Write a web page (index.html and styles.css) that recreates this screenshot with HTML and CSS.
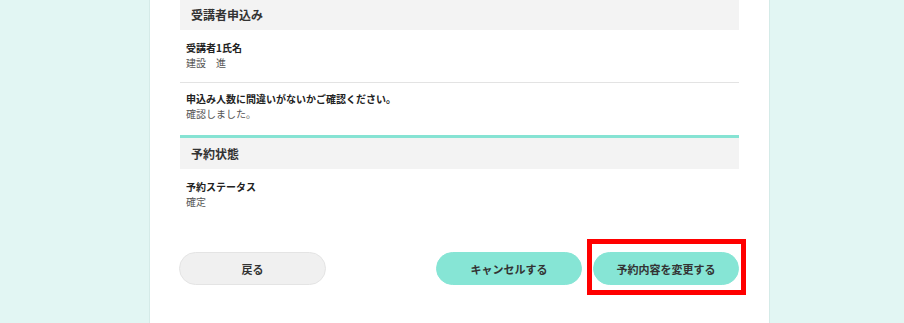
FILE: index.html
```html
<!DOCTYPE html>
<html lang="ja">
<head>
    <meta charset="UTF-8">
    <meta name="viewport" content="width=device-width, initial-scale=1.0">
    <title>予約内容の確認</title>
    <link rel="stylesheet" href="styles.css">
</head>
<body>
    <div class="container">
        <section class="section first">
            <h2 class="section-head">受講者申込み</h2>
            <div class="item">
                <div class="item-label">受講者1氏名</div>
                <div class="item-value">建設　進</div>
            </div>
            <div class="item">
                <div class="item-label">申込み人数に間違いがないかご確認ください。</div>
                <div class="item-value">確認しました。</div>
            </div>
        </section>

        <section class="section">
            <h2 class="section-head">予約状態</h2>
            <div class="item">
                <div class="item-label">予約ステータス</div>
                <div class="item-value">確定</div>
            </div>
        </section>

        <div class="action-buttons">
            <button class="btn back">戻る</button>
            <div class="right-buttons">
                <button class="btn primary">キャンセルする</button>
                <span class="highlight">
                    <button class="btn primary">予約内容を変更する</button>
                </span>
            </div>
        </div>
    </div>
</body>
</html>
```

FILE: styles.css
```css
* {
    margin: 0;
    padding: 0;
    box-sizing: border-box;
    font-family: "Noto Sans CJK JP", "Noto Sans", sans-serif;
}

body {
    background-color: #e2f6f3;
    color: #333;
    min-height: 100vh;
}

.container {
    background-color: #fff;
    border-left: 1px solid #d5ebe8;
    border-right: 1px solid #d5ebe8;
    width: 621px;
    min-height: 100vh;
    margin-left: 149px;
    padding: 0 30px 40px 30px;
}

.section {
    border-top: 3px solid #86e3d3;
    margin-top: 1px;
}

.section.first {
    border-top: none;
    margin-top: -1px;
}

.section-head {
    background-color: #f3f3f3;
    height: 31px;
    line-height: 31px;
    padding-left: 11px;
    font-size: 12px;
    font-weight: bold;
    color: #333;
}

.item {
    padding: 10px 6px 12px;
}

.item + .item {
    border-top: 1px solid #e3e3e3;
    padding-top: 8px;
    padding-bottom: 13px;
}

.item-label {
    font-size: 10px;
    line-height: 15px;
    font-weight: bold;
    color: #222;
}

.item-value {
    font-size: 10px;
    line-height: 15px;
    color: #555;
}

.action-buttons {
    display: flex;
    justify-content: space-between;
    align-items: center;
    margin-top: 31px;
}

.right-buttons {
    display: flex;
    gap: 11px;
}

.btn {
    width: 146px;
    height: 33px;
    border-radius: 17px;
    border: 1px solid #86e5d5;
    background-color: #86e5d5;
    color: #333;
    font-size: 11px;
    font-weight: bold;
    cursor: pointer;
}

.btn.back {
    width: 147px;
    margin-left: -1px;
    background-color: #f0f0f0;
    border-color: #e4e4e4;
}

.highlight {
    position: relative;
    display: block;
}

.highlight::after {
    content: "";
    position: absolute;
    top: -13px;
    left: -6px;
    right: -7px;
    bottom: -10px;
    border: 5px solid #ff0000;
    pointer-events: none;
}
```
